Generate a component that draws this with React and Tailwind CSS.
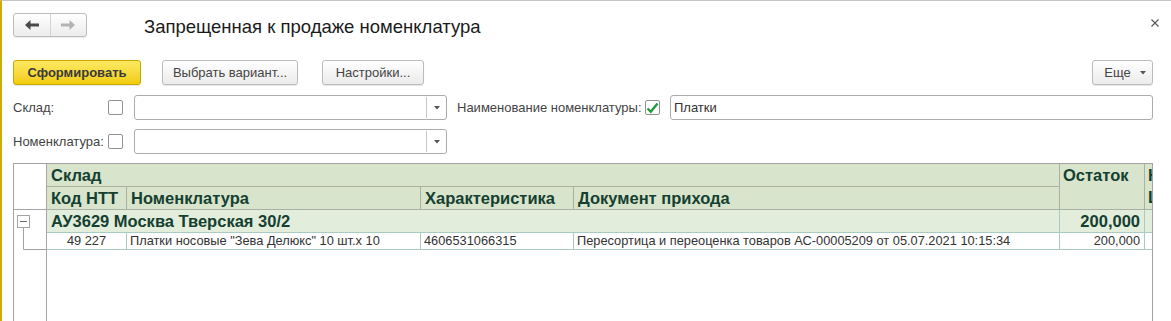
const headText = "text-[#153f31] font-bold text-[16.5px]";

function Arrow({ dir = "left", color }) {
  return (
    <svg width="14" height="10" viewBox="0 0 14 10" className={dir === "right" ? "-scale-x-100" : ""}>
      <path d="M0 5 L5.5 0 L5.5 3.5 L14 3.5 L14 6.5 L5.5 6.5 L5.5 10 Z" fill={color} />
    </svg>
  );
}

function NavButtons() {
  return (
    <div className="flex h-[24px] w-[74px] shrink-0 overflow-hidden rounded-[3px] border border-[#bdbdbd] bg-linear-to-b from-white to-[#ececec] shadow-[0_1px_1px_rgba(0,0,0,0.08)]">
      <button className="flex flex-1 items-center justify-center border-r border-[#d2d2d2]">
        <Arrow color="#4a4a4a" />
      </button>
      <button className="flex flex-1 items-center justify-center">
        <Arrow dir="right" color="#b3b3b3" />
      </button>
    </div>
  );
}

function Button({ children, className = "" }) {
  return (
    <button
      className={
        "flex h-[25px] items-center justify-center rounded-[3px] border border-[#bcbcbc] bg-linear-to-b from-white to-[#ebebeb] text-[13px] text-[#444] shadow-[0_1px_1px_rgba(0,0,0,0.1)] " +
        className
      }
    >
      {children}
    </button>
  );
}

function Checkbox({ checked }) {
  return (
    <span className="flex h-[15px] w-[15px] shrink-0 items-center justify-center rounded-[2px] border border-[#929292] bg-white">
      {checked && (
        <svg width="13" height="12" viewBox="0 0 13 12">
          <path d="M1.5 6.5 L4.8 9.8 L11.5 1.5" fill="none" stroke="#1f9a3b" strokeWidth="2.3" />
        </svg>
      )}
    </span>
  );
}

function Combo() {
  return (
    <div className="flex h-[25px] w-[313px] rounded-[3px] border border-[#acacac] bg-white">
      <div className="flex-1" />
      <div className="my-[1px] flex w-[20px] items-center justify-center border-l border-[#c8c8c8]">
        <svg width="6" height="4" viewBox="0 0 6 4">
          <path d="M0 0 L6 0 L3 3.5 Z" fill="#555" />
        </svg>
      </div>
    </div>
  );
}

function TreeCol() {
  return (
    <div className="w-[33px] shrink-0 border-r border-[#a6a6a6]">
      <div className="h-[46px] border-b border-[#a6a6a6]" />
      <svg width="32" height="44" viewBox="0 0 32 44" className="block">
        <rect x="3.5" y="5.5" width="12" height="12" fill="white" stroke="#a3a3a3" />
        <path d="M6 11.5 H13" stroke="#6a6a6a" />
        <path d="M9.5 17.5 V39.5 H32" fill="none" stroke="#a3a3a3" />
      </svg>
    </div>
  );
}

function ReportTable() {
  const hb = "border-r border-b border-[#a9b1a4]";
  const bb = "border-r border-b border-[#a9cbc1]";
  return (
    <div className="mt-[9px] ml-[11px] flex h-[170px] w-[1140px] shrink-0 border border-[#a3a3a3] bg-white">
      <TreeCol />
      <div className="w-[1105px] min-w-0 overflow-hidden">
        <table className="w-[1198px] table-fixed border-separate border-spacing-0">
          <colgroup>
            <col className="w-[80px]" />
            <col className="w-[294px]" />
            <col className="w-[153px]" />
            <col className="w-[486px]" />
            <col className="w-[85px]" />
            <col className="w-[100px]" />
          </colgroup>
          <thead className="bg-[#d8e4cb]">
            <tr>
              <th colSpan={4} className={`${hb} ${headText} h-[23px] pl-[4px] text-left align-middle leading-[22px]`}>
                Склад
              </th>
              <th rowSpan={2} className={`${hb} ${headText} pl-[3px] text-left align-top leading-[22px]`}>
                Остаток
              </th>
              <th rowSpan={2} className={`${hb} ${headText} pl-[3px] text-left align-top leading-[22px]`}>
                Начальная
                <br />
                Цена
              </th>
            </tr>
            <tr>
              <th className={`${hb} ${headText} h-[23px] pl-[4px] text-left leading-[22px]`}>Код НТТ</th>
              <th className={`${hb} ${headText} pl-[4px] text-left leading-[22px]`}>Номенклатура</th>
              <th className={`${hb} ${headText} pl-[4px] text-left leading-[22px]`}>Характеристика</th>
              <th className={`${hb} ${headText} pl-[4px] text-left leading-[22px]`}>Документ прихода</th>
            </tr>
          </thead>
          <tbody>
            <tr className="bg-[#e3eddb]">
              <td colSpan={4} className={`${bb} ${headText} h-[23px] whitespace-nowrap pl-[4px] leading-[22px]`}>
                АУ3629 Москва Тверская 30/2
              </td>
              <td className={`${bb} ${headText} pr-[4px] text-right leading-[22px]`}>200,000</td>
              <td className={bb} />
            </tr>
            <tr className="text-[12.8px] text-[#333]">
              <td className={`${bb} h-[17px] text-center leading-[16px]`}>49 227</td>
              <td className={`${bb} whitespace-nowrap pl-[3px] leading-[16px]`}>
                Платки носовые "Зева Делюкс" 10 шт.х 10
              </td>
              <td className={`${bb} pl-[3px] leading-[16px]`}>4606531066315</td>
              <td className={`${bb} whitespace-nowrap pl-[3px] leading-[16px]`}>
                Пересортица и переоценка товаров АС-00005209 от 05.07.2021 10:15:34
              </td>
              <td className={`${bb} pr-[4px] text-right leading-[16px]`}>200,000</td>
              <td className={bb} />
            </tr>
          </tbody>
        </table>
      </div>
    </div>
  );
}

export default function App() {
  return (
    <div className="flex h-[321px] w-[1171px] flex-col overflow-hidden border-t border-l-2 border-t-[#c4c4c4] border-l-[#cdad00] bg-white font-['Liberation_Sans',Arial,sans-serif] text-[13px] text-[#444]">
      <div className="flex h-[36px] shrink-0 items-start pt-[12px] pl-[11px]">
        <NavButtons />
        <h1 className="ml-[57px] pt-[2px] text-[18.5px] leading-[24px] font-normal text-[#1b1b1b]">
          Запрещенная к продаже номенклатура
        </h1>
        <button className="mt-[5px] mr-[11px] ml-auto flex h-[10px] w-[10px] items-center justify-center">
          <svg width="8" height="8" viewBox="0 0 8 8">
            <path d="M0.5 0.5 L7.5 7.5 M7.5 0.5 L0.5 7.5" stroke="#555" strokeWidth="1.1" />
          </svg>
        </button>
      </div>

      <div className="mt-[23px] flex items-center pr-[18px] pl-[11px]">
        <button className="flex h-[25px] w-[128px] items-center justify-center rounded-[3px] border border-[#c6a800] bg-linear-to-b from-[#fde95e] to-[#f1cc00] text-[13px] font-bold text-[#3a3a3a] shadow-[0_1px_1px_rgba(0,0,0,0.1)]">
          Сформировать
        </button>
        <Button className="ml-[21px] w-[136px]">Выбрать вариант...</Button>
        <Button className="ml-[24px] w-[102px]">Настройки...</Button>
        <Button className="ml-auto w-[61px] gap-[9px] pl-[5px]">
          <span>Еще</span>
          <svg width="6" height="4" viewBox="0 0 6 4">
            <path d="M0 0 L6 0 L3 3.5 Z" fill="#555" />
          </svg>
        </Button>
      </div>

      <div className="mt-[10px] flex items-center pr-[18px] pl-[11px]">
        <span className="w-[95px]">Склад:</span>
        <Checkbox />
        <div className="ml-[11px]">
          <Combo />
        </div>
        <span className="ml-[10px] w-[188px]">Наименование номенклатуры:</span>
        <Checkbox checked />
        <div className="ml-[10px] flex h-[25px] flex-1 items-center rounded-[3px] border border-[#acacac] bg-white pl-[3px] text-[#333]">
          Платки
        </div>
      </div>

      <div className="mt-[9px] flex items-center pr-[18px] pl-[11px]">
        <span className="w-[95px]">Номенклатура:</span>
        <Checkbox />
        <div className="ml-[11px]">
          <Combo />
        </div>
      </div>

      <ReportTable />
    </div>
  );
}
